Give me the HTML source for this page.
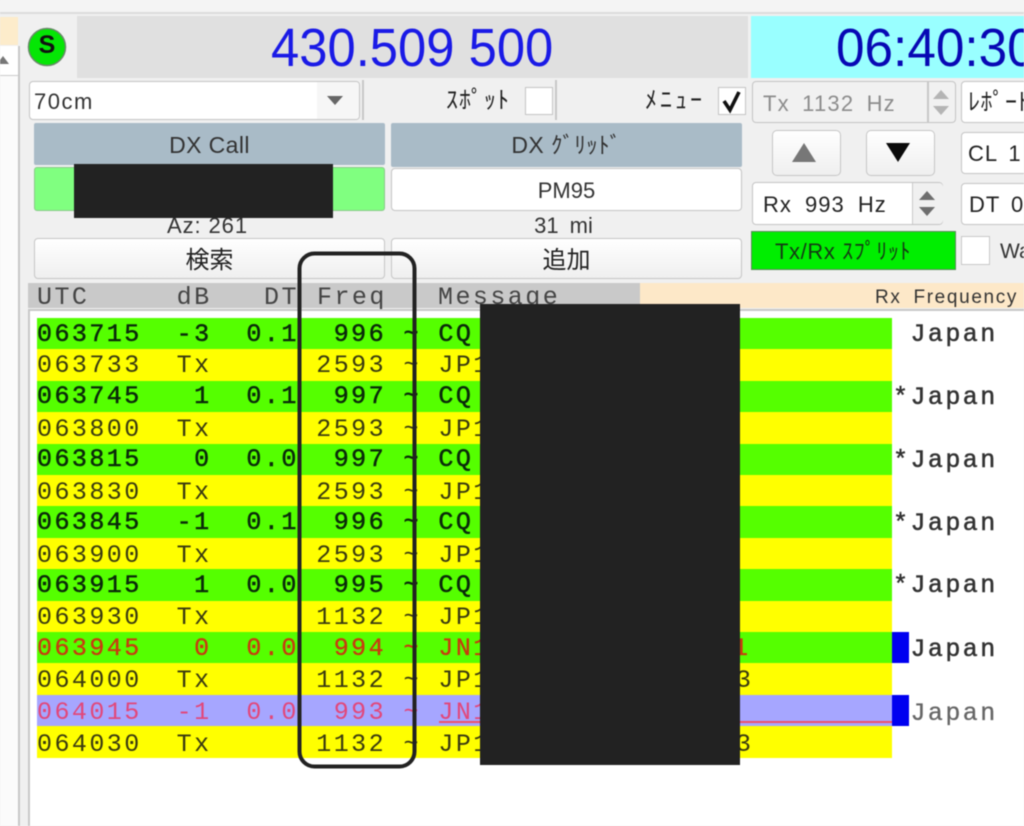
<!DOCTYPE html>
<html lang="ja"><head><meta charset="utf-8"><title>WSJT-X</title>
<style>
html,body{margin:0;padding:0;background:#f0f0f0}
#p{position:relative;width:1024px;height:826px;overflow:hidden;background:#f0f0f0;font-family:"Liberation Sans","Noto Sans CJK JP",sans-serif;color:#222;filter:blur(.4px)}
#p div,#p svg{position:absolute;box-sizing:border-box}
.t{white-space:pre;line-height:1}
.box{background:#fff;border:1.5px solid #c4c4c4;border-radius:4px}
.hd{background:#a9bbc7;text-align:center;font-size:23px;line-height:44px;color:#333;border-radius:2px;letter-spacing:.4px}
.btn{background:linear-gradient(#fff,#efefef);border:1.5px solid #c6c6c6;border-radius:4px;text-align:center;color:#222}
.r{left:37px;width:855px;height:31.4px}
.g{background:#55ff00}.y{background:#ffff00}.v{background:#a6a6ff}
.m{left:37px;font-family:"Liberation Mono",monospace;font-size:25px;letter-spacing:2.45px;white-space:pre;line-height:1;color:#3a3a10}
.b{color:#0a2a0a;-webkit-text-stroke:.5px #0a2a0a}
.o{color:#c93a10;-webkit-text-stroke:.3px #c93a10}.k{color:#e2477a}
.j{left:893px;font-family:"Liberation Mono",monospace;font-size:25px;letter-spacing:2.45px;white-space:pre;line-height:1;color:#333;-webkit-text-stroke:.5px #333}
</style></head><body>
<div id="p">
<!-- window frame -->
<div style="left:0;top:0;width:1024px;height:13px;background:#f4f4f4"></div>
<div style="left:0;top:12px;width:1024px;height:2px;background:#dcdcdc"></div>
<div style="left:0;top:17px;width:18px;height:28px;background:#fdeccb"></div>
<div style="left:0;top:46px;width:18px;height:30px;background:#fff;border-bottom:1px solid #ccc"></div>
<div style="left:0;top:76px;width:18px;height:750px;background:#fbfbfb"></div>
<div style="left:18px;top:46px;width:1.5px;height:780px;background:#c8c8c8"></div>
<svg style="left:0;top:55px" width="12" height="10"><path d="M-3 9H9L3 1Z" fill="#777"/></svg>

<!-- S indicator -->
<svg style="left:27px;top:27px" width="40" height="40"><circle cx="20" cy="20" r="18.5" fill="#05e605" stroke="#6a8a6a" stroke-width="1.5"/></svg>
<div class="t" style="left:37px;top:33px;width:20px;text-align:center;font-size:25px;font-weight:bold;color:#111">S</div>

<!-- freq + clock -->
<div style="left:77px;top:16px;width:671px;height:62px;background:#e0e0e0"></div>
<div class="t" style="left:271px;top:21px;font-size:54px;color:#1a1ae6;transform-origin:0 0;transform:scaleX(.94)">430.509 500</div>
<div style="left:751px;top:16px;width:273px;height:62px;background:#99ffff"></div>
<div class="t" style="left:836px;top:21px;font-size:54px;color:#0808b4;transform-origin:0 0;transform:scaleX(.95)">06:40:30</div>

<!-- band combo -->
<div class="box" style="left:29px;top:81px;width:331px;height:39px;overflow:hidden"><div style="right:0;top:0;width:42px;height:38px;background:#f6f6f6"></div></div>
<div class="t" style="left:34px;top:91px;font-size:22px;letter-spacing:1.5px;color:#333">70cm</div>
<svg style="left:326px;top:95px" width="18" height="12"><path d="M1 1H17L9 10Z" fill="#666"/></svg>
<div style="left:362px;top:80px;width:2px;height:40px;background:#c8c8c8"></div>
<div class="t" style="left:446px;top:89px;font-size:24px;letter-spacing:1px;color:#222">ｽﾎﾟｯﾄ</div>
<div style="left:525px;top:87px;width:28px;height:28px;background:#fff;border:1.5px solid #c4c4c4"></div>
<div style="left:555px;top:80px;width:2px;height:40px;background:#c8c8c8"></div>
<div class="t" style="left:645px;top:89px;font-size:24px;letter-spacing:3px;color:#222">ﾒﾆｭｰ</div>
<div style="left:718px;top:87px;width:28px;height:28px;background:#fff;border:1.5px solid #c4c4c4"></div>
<svg style="left:718px;top:87px" width="28" height="28"><path d="M6 14L12 23L21 5" fill="none" stroke="#111" stroke-width="3.6"/></svg>

<!-- Tx spin -->
<div class="box" style="left:752px;top:81px;width:204px;height:42px;background:#f1f1f1"></div>
<div style="left:927px;top:82px;width:1.5px;height:40px;background:#c8c8c8"></div>
<div class="t" style="left:763px;top:93px;font-size:22px;word-spacing:5px;letter-spacing:1.2px;color:#8c8c8c">Tx 1132 Hz</div>
<svg style="left:931px;top:88px" width="20" height="30"><path d="M2 11H18L10 2ZM2 18H18L10 27Z" fill="#b4b4b4"/></svg>

<!-- right column -->
<div class="box" style="left:961px;top:81px;width:70px;height:42px"></div>
<div class="t" style="left:968px;top:91px;font-size:24px;letter-spacing:.5px;color:#222">ﾚﾎﾟｰﾄ</div>
<div class="box" style="left:961px;top:132px;width:70px;height:42px"></div>
<div class="t" style="left:968px;top:143px;font-size:22px;word-spacing:4px;letter-spacing:1px;color:#222">CL 1</div>
<div class="box" style="left:961px;top:183px;width:70px;height:42px"></div>
<div class="t" style="left:969px;top:194px;font-size:22px;word-spacing:4px;letter-spacing:1px;color:#222">DT 0</div>
<div style="left:961px;top:236px;width:29px;height:29px;background:#fff;border:1.5px solid #c8c8c8"></div>
<div class="t" style="left:1000px;top:241px;font-size:21px;color:#333">Wa</div>

<!-- arrows -->
<div class="btn" style="left:772px;top:130px;width:69px;height:46px;border-radius:5px"></div>
<svg style="left:791px;top:142px" width="26" height="22"><path d="M1 20H25L13 1Z" fill="#777"/></svg>
<div class="btn" style="left:866px;top:130px;width:69px;height:46px;border-radius:5px"></div>
<svg style="left:885px;top:142px" width="26" height="22"><path d="M1 1H25L13 20Z" fill="#0a0a0a"/></svg>

<!-- Rx spin -->
<div class="box" style="left:752px;top:182px;width:191px;height:43px"></div>
<div style="left:912px;top:183px;width:31px;height:41px;background:#f0f0f0;border-left:1.5px solid #c8c8c8;border-radius:0 4px 4px 0"></div>
<div class="t" style="left:763px;top:194px;font-size:22px;word-spacing:6px;letter-spacing:1px;color:#222">Rx 993 Hz</div>
<svg style="left:917px;top:189px" width="20" height="30"><path d="M2 11H18L10 2ZM2 18H18L10 27Z" fill="#6e6e6e"/></svg>

<!-- split -->
<div style="left:751px;top:231px;width:205px;height:39px;background:#00ee00;border:1.5px solid #5a8a5a"></div>
<div class="t" style="left:775px;top:241px;font-size:22px;letter-spacing:.6px;color:#143a14">Tx/Rx ｽﾌﾟﾘｯﾄ</div>

<!-- DX -->
<div class="hd" style="left:34px;top:123px;width:351px;height:42px">DX Call</div>
<div class="hd" style="left:391px;top:123px;width:351px;height:44px">DX ｸﾞﾘｯﾄﾞ</div>
<div style="left:34px;top:167px;width:351px;height:44px;background:#80ff80;border:1px solid #8ac88a;border-radius:3px"></div>
<div class="box" style="left:391px;top:168px;width:351px;height:43px;text-align:center;font-size:22px;line-height:44px;color:#333;background:#fff">PM95</div>
<div class="t" style="left:32px;top:215px;width:351px;text-align:center;font-size:22px;letter-spacing:.9px;color:#333">Az: 261</div>
<div class="t" style="left:388px;top:215px;width:351px;text-align:center;font-size:22px;word-spacing:5px;color:#333">31 mi</div>
<div class="btn" style="left:34px;top:238px;width:351px;height:41px;font-size:24px;line-height:44px">検索</div>
<div class="btn" style="left:391px;top:238px;width:351px;height:41px;font-size:24px;line-height:44px">追加</div>
<div style="left:74px;top:164px;width:259px;height:54px;background:#222"></div>

<!-- table header -->
<div style="left:28px;top:283px;width:612px;height:25px;background:#c9c9c9"></div>
<div style="left:640px;top:283px;width:384px;height:25px;background:#fde8c8"></div>
<div class="m" style="top:285px;color:#444">UTC     dB  </div>
<div class="m" style="left:264px;top:285px;color:#444">DT</div>
<div class="m" style="left:317px;top:285px;color:#444">Freq</div>
<div class="m" style="left:438px;top:285px;color:#444">Message</div>
<div class="t" style="left:875px;top:288px;font-size:19px;word-spacing:5px;letter-spacing:1.65px;color:#333">Rx Frequency</div>

<!-- table body -->
<div style="left:28px;top:309px;width:996px;height:517px;background:#fff;border-left:2px solid #c8c8c8;border-top:2px solid #c8c8c8"></div>

<div class="r g" style="top:318px"></div>
<div class="r y" style="top:349.4px"></div>
<div class="r g" style="top:380.8px"></div>
<div class="r y" style="top:412.2px"></div>
<div class="r g" style="top:443.6px"></div>
<div class="r y" style="top:475px"></div>
<div class="r g" style="top:506.4px"></div>
<div class="r y" style="top:537.8px"></div>
<div class="r g" style="top:569.2px"></div>
<div class="r y" style="top:600.6px"></div>
<div class="r g" style="top:632px"></div>
<div class="r y" style="top:663.4px"></div>
<div class="r v" style="top:694.8px"></div>
<div class="r y" style="top:726.2px"></div>
<div style="left:439px;top:721px;width:453px;height:2px;background:#f0506a"></div>

<div class="m b" style="top:322px">063715  -3  0.1  996 ~ CQ</div>
<div class="m" style="top:353px">063733  Tx      2593 ~ JP1</div>
<div class="m b" style="top:384px">063745   1  0.1  997 ~ CQ</div>
<div class="m" style="top:417px">063800  Tx      2593 ~ JP1</div>
<div class="m b" style="top:447px">063815   0  0.0  997 ~ CQ</div>
<div class="m" style="top:480px">063830  Tx      2593 ~ JP1</div>
<div class="m b" style="top:510px">063845  -1  0.1  996 ~ CQ</div>
<div class="m" style="top:543px">063900  Tx      2593 ~ JP1</div>
<div class="m b" style="top:573px">063915   1  0.0  995 ~ CQ</div>
<div class="m" style="top:605px">063930  Tx      1132 ~ JP1</div>
<div class="m o" style="top:636px">063945   0  0.0  994 ~ JN1</div>
<div class="m" style="top:668px">064000  Tx      1132 ~ JP1</div>
<div class="m k" style="top:700px">064015  -1  0.0  993 ~ JN1</div>
<div class="m" style="top:732px">064030  Tx      1132 ~ JP1</div>
<div class="m o" style="left:733px;top:636px">1</div>
<div class="m" style="left:736px;top:668px">3</div>
<div class="m" style="left:736px;top:732px">3</div>

<div class="j" style="top:322px"> Japan</div>
<div class="j" style="top:385px">*Japan</div>
<div class="j" style="top:448px">*Japan</div>
<div class="j" style="top:511px">*Japan</div>
<div class="j" style="top:573px">*Japan</div>
<div style="left:892px;top:632px;width:17px;height:31.4px;background:#0000f0"></div>
<div class="j" style="top:637px"> Japan</div>
<div style="left:892px;top:695px;width:17px;height:31.4px;background:#0000f0"></div>
<div class="j" style="top:701px;color:#666;-webkit-text-stroke:.3px #666"> Japan</div>

<!-- redaction + annotation -->
<div style="left:480px;top:304px;width:260px;height:461px;background:#222"></div>
<svg style="left:290px;top:245px" width="135" height="530"><rect x="9.5" y="8.5" width="115" height="513" rx="15" fill="none" stroke="#222" stroke-width="4"/></svg>
</div>
</body></html>
